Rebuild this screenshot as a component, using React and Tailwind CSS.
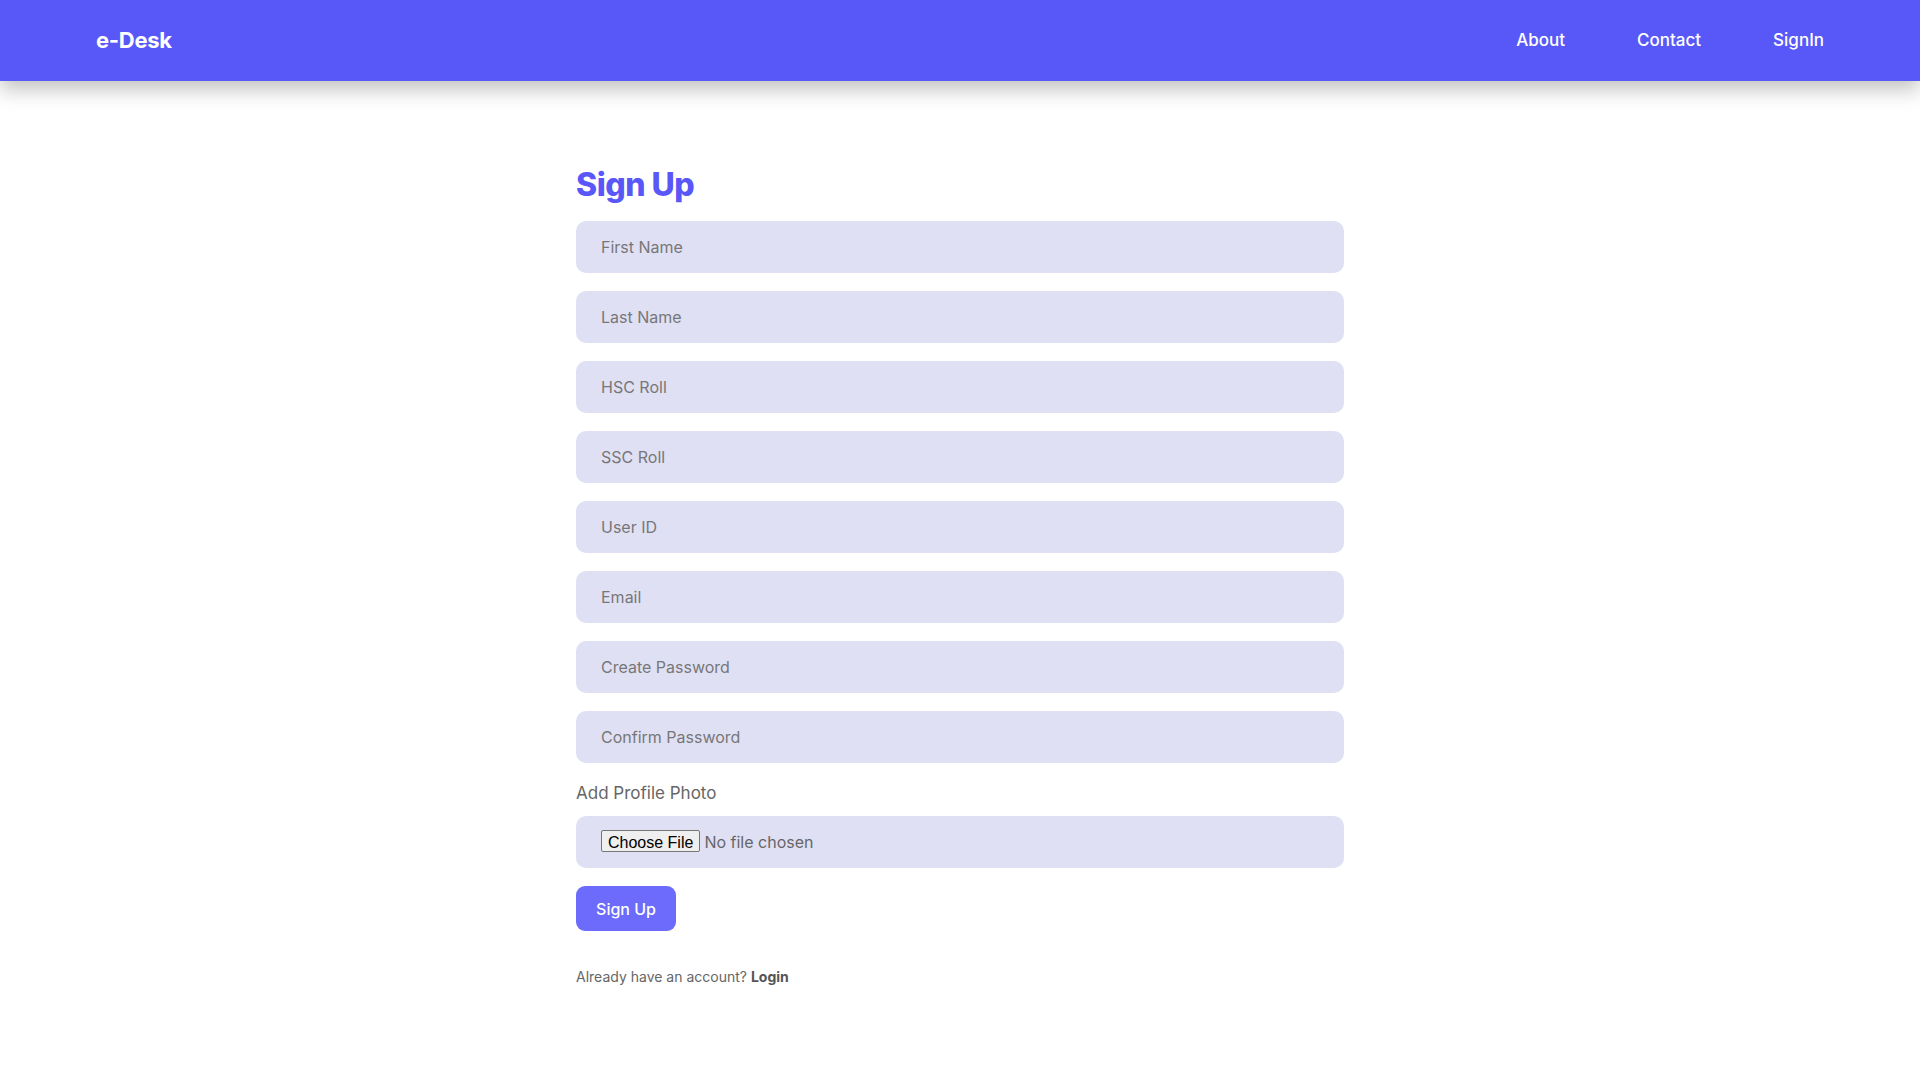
const fields = [
  "First Name",
  "Last Name",
  "HSC Roll",
  "SSC Roll",
  "User ID",
  "Email",
  "Create Password",
  "Confirm Password",
];

function Navbar() {
  return (
    <nav className="relative z-10 flex h-[81px] items-center justify-between bg-[#5858f8] pl-[96px] pr-[96px] shadow-[0_8px_20px_rgba(0,0,0,0.25)]">
      <a href="#" className="text-[22px] font-bold tracking-[-0.3px] text-white">
        e-Desk
      </a>
      <ul className="flex items-center gap-[72px] text-[17px] font-medium text-white">
        <li><a href="#">About</a></li>
        <li><a href="#">Contact</a></li>
        <li><a href="#">SignIn</a></li>
      </ul>
    </nav>
  );
}

export default function App() {
  return (
    <div className="min-h-[1395px] bg-white font-['Inter','Liberation_Sans',sans-serif]">
      <Navbar />
      <main className="mx-auto w-[768px] pt-[84px]">
        <h1 className="mb-[16px] text-[32px] font-extrabold leading-[40px] tracking-[-0.5px] text-[#5a57f8]">
          Sign Up
        </h1>
        <form className="flex flex-col">
          <div className="flex flex-col gap-[18px]">
            {fields.map((f) => (
              <input
                key={f}
                type={f.includes("Password") ? "password" : f === "Email" ? "email" : "text"}
                placeholder={f}
                className="h-[52px] w-full rounded-[10px] bg-[#e0e0f5] px-[25px] text-[16px] text-[#444] outline-none placeholder:text-[#777]"
              />
            ))}
          </div>
          <label className="mt-[17px] text-[17px] leading-[26px] text-[#666]">
            Add Profile Photo
          </label>
          <div className="mt-[10px] flex h-[52px] items-center rounded-[10px] bg-[#e0e0f5] px-[25px]">
            <input
              type="file"
              className="text-[16px] text-[#666] file:mr-[4px] file:h-[22px] file:rounded-[2px] file:border file:border-solid file:border-[#767676] file:bg-[#efefef] file:px-[6px] file:font-['Liberation_Sans',sans-serif] file:text-[16px] file:text-black"
            />
          </div>
          <button
            type="button"
            className="mt-[18px] h-[45px] w-[100px] rounded-[9px] bg-[#6c6bfb] text-[16px] font-medium text-white"
          >
            Sign Up
          </button>
          <p className="mt-[35px] text-[14px] text-[#666]">
            Already have an account? <a href="#" className="font-bold text-[#555]">Login</a>
          </p>
        </form>
      </main>
    </div>
  );
}
